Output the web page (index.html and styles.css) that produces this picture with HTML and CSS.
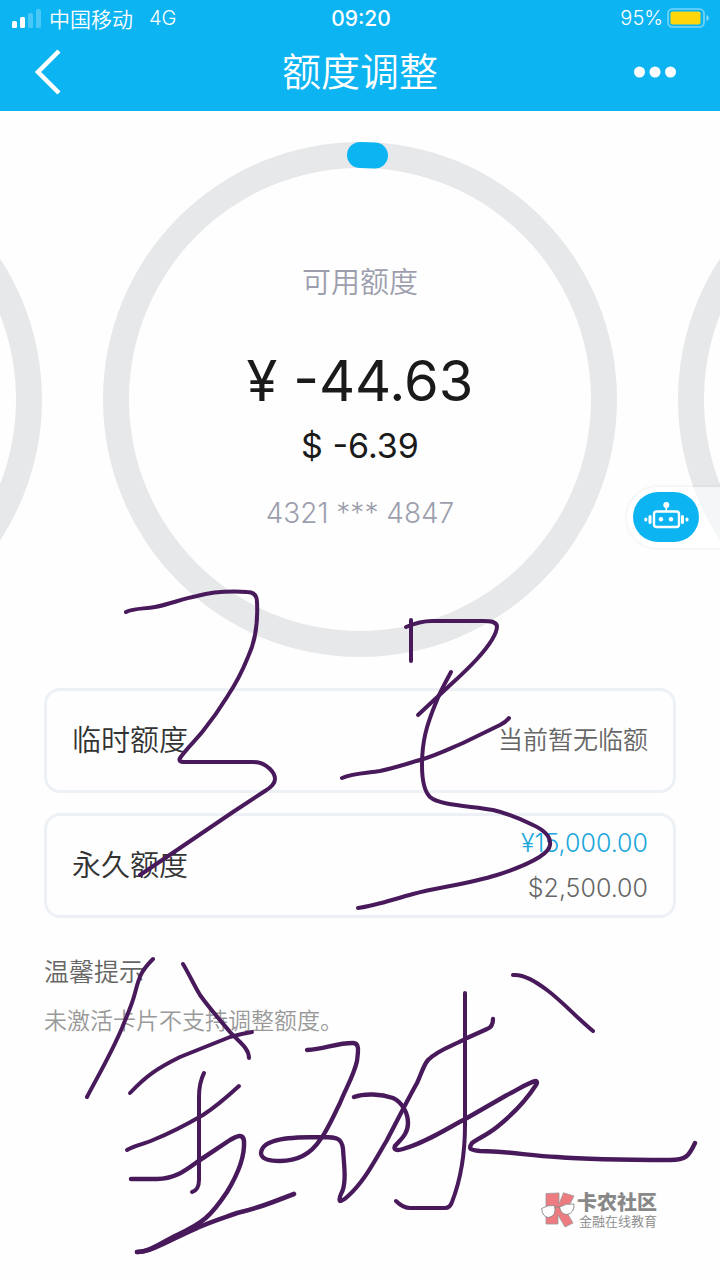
FILE: index.html
```html
<!DOCTYPE html>
<html lang="zh-CN">
<head>
<meta charset="utf-8">
<meta name="viewport" content="width=device-width, initial-scale=1">
<title>额度调整</title>
<link rel="stylesheet" href="styles.css">
</head>
<body>
<div class="screen">
  <header class="header">
    <div class="status">
      <div class="status-left">
        <svg class="signal" viewBox="0 0 30 20" aria-hidden="true">
          <rect x="0" y="13" width="5" height="7" rx="1.5"/>
          <rect x="8" y="9" width="5" height="11" rx="1.5"/>
          <rect x="16" y="5" width="5" height="15" rx="1.5" opacity=".25"/>
          <rect x="24" y="1" width="5" height="19" rx="1.5" opacity=".25"/>
        </svg>
        <span class="carrier">中国移动</span>
        <span>4G</span>
      </div>
      <time class="clock">09:20</time>
      <div class="status-right">
        <span>95%</span>
        <svg class="battery" viewBox="0 0 43 20" aria-hidden="true">
          <rect x="1" y="1" width="36" height="18" rx="4.5" fill="none" stroke="#fff" stroke-opacity=".45" stroke-width="1.6"/>
          <rect x="3.5" y="3.5" width="30" height="13" rx="2" fill="#ffd60a"/>
          <path d="M39.5 7c3 .8 3 5.200 0 6z" fill="#fff" fill-opacity=".5"/>
        </svg>
      </div>
    </div>
    <nav class="nav">
      <button class="icon-button" type="button" aria-label="返回">
        <svg class="back" viewBox="0 0 28 46"><path d="M25 2 4 23l21 21" fill="none" stroke="#fff" stroke-width="4.500"/></svg>
      </button>
      <h1 class="title">额度调整</h1>
      <button class="icon-button icon-button-end" type="button" aria-label="更多">
        <svg class="more" viewBox="0 0 42 12"><circle cx="5.500" cy="6" r="5.500"/><circle cx="21" cy="6" r="5.500"/><circle cx="36.500" cy="6" r="5.500"/></svg>
      </button>
    </nav>
  </header>

  <main>
    <section class="carousel">
      <div class="ring"></div>
      <div class="ring ring-active">
        <svg class="marker" viewBox="0 0 514 514" aria-hidden="true"><path d="M257 13A244 244 0 0 1 272 13.500" fill="none" stroke="#0cb4f2" stroke-width="26" stroke-linecap="round"/></svg>
        <p class="ring-label">可用额度</p>
        <p class="amount">¥ -44.63</p>
        <p class="amount-usd">$ -6.39</p>
        <p class="card-number">4321 *** 4847</p>
      </div>
      <div class="ring"></div>
      <button class="assistant" type="button" aria-label="智能客服">
        <svg class="robot" viewBox="0 0 66 50">
          <rect width="66" height="50" rx="25" fill="#0cb4f2"/>
          <g fill="none" stroke="#fff" stroke-linecap="round">
            <rect x="21" y="19.500" width="25" height="15.500" rx="2.500" stroke-width="2.400"/>
            <path d="M33.300 14v5" stroke-width="1.600"/>
            <path d="M17 24.500v6M49.500 24.500v6" stroke-width="3"/>
            <path d="M12.800 27v1M54 27v1" stroke-width="3"/>
          </g>
          <g fill="#fff"><circle cx="33.300" cy="13" r="3"/><circle cx="28" cy="27.300" r="2.200"/><circle cx="38" cy="27.300" r="2.200"/></g>
        </svg>
      </button>
    </section>

    <section class="limits">
      <div class="limit-card">
        <h2 class="limit-name">临时额度</h2>
        <p class="limit-value">当前暂无临额</p>
      </div>
      <div class="limit-card">
        <h2 class="limit-name">永久额度</h2>
        <div class="limit-value">
          <p class="limit-cny">¥15,000.00</p>
          <p>$2,500.00</p>
        </div>
      </div>
    </section>

    <section class="tips">
      <h2 class="tips-title">温馨提示</h2>
      <p class="tips-text">未激活卡片不支持调整额度。</p>
    </section>
  </main>

  <svg class="ink" viewBox="0 0 720 1280" aria-hidden="true">
    <path d="M126 612C134 608 144 609 155 607C171 604 181 599 197 596C212 592 231 591 247 592C254 592 257 596 257 602C258 622 256 640 248 657C242 672 235 685 227 697C219 710 211 721 203 731C195 741 187 748 180 758Q178 762 184 762H253C262 762 267 766 270 769C274 773 275 776 275 779C275 784 270 788 265 791L233 812L180 848L140 875"/>
    <path d="M411 620V661"/>
    <path d="M406 627C413 624 422 621 432 621H483C492 621 496 622 497 626C497 635 487 648 477 659C467 670 458 678 447 688L418 715"/>
    <path d="M451 672C445 683 440 692 437 700C426 726 422 742 422 765C422 781 424 791 430 797C440 806 474 806 493 810C510 814 523 820 533 825C546 831 551 838 550 845C549 855 525 866 497 875C468 884 440 887 413 894C391 900 374 906 358 908"/>
    <path d="M342 778C353 773 368 773 380 771C394 768 406 764 420 760C435 756 449 749 463 743L500 725Q506 722 509 718"/>
    <path d="M153 959C140 972 139 978 135 993C131 1008 127 1015 122 1028C111 1054 99 1074 87 1097"/>
    <path d="M183 964C189 974 194 985 200 995C210 1009 220 1020 230 1032C239 1042 249 1048 249 1058"/>
    <path d="M130 1093C147 1075 158 1068 180 1057L230 1037Q240 1034 252 1032"/>
    <path d="M204 1073C200 1081 199 1088 199 1097V1180Q199 1190 192 1192"/>
    <path d="M127 1150C134 1146 144 1144 153 1140C168 1134 191 1122 203 1115C217 1106 227 1097 239 1086"/>
    <path d="M131 1179H157C178 1179 189 1167 203 1158L230 1140C237 1136 243 1133 244 1141C245 1157 238 1174 227 1192C211 1216 203 1223 177 1235C164 1241 150 1252 137 1252" stroke-width="4.500"/>
    <path d="M137 1252C152 1252 175 1237 197 1228C210 1222 223 1218 237 1213C249 1210 260 1207 273 1202L294 1194" stroke-width="4.600"/>
    <path d="M307 1050C325 1049 336 1043 353 1043C360 1043 358 1052 357 1061C354 1075 346 1088 340 1103C333 1117 327 1131 320 1140C310 1155 296 1161 280 1161C268 1161 261 1159 261 1153C262 1138 292 1137 323 1137C336 1137 342 1138 343 1149C344 1165 347 1184 341 1194C338 1201 339 1204 347 1197C364 1182 374 1162 387 1140C398 1119 408 1099 417 1083C421 1075 423 1066 428 1060C439 1049 453 1046 467 1038L487 1029Q493 1027 493 1019" stroke-width="4.300"/>
    <path d="M354 1097C365 1093 381 1094 393 1098C402 1102 408 1113 408 1123C408 1134 401 1139 395 1146C393 1150 397 1151 403 1149C425 1143 446 1129 467 1118L507 1095C517 1090 529 1082 536 1081Q538 1082 536 1085C525 1102 512 1115 497 1127C487 1135 479 1138 472 1143C468 1149 470 1150 480 1151C507 1151 531 1156 557 1157C593 1160 632 1160 670 1160C686 1160 689 1156 695 1143" stroke-width="4.400"/>
    <path d="M465 993V1125C465 1157 459 1184 452 1202Q450 1208 445 1208H412Q404 1209 396 1201"/>
    <path d="M513 975C524 974 536 982 547 990C563 1002 577 1018 593 1031"/>
  </svg>

  <footer class="watermark">
    <svg class="logo" viewBox="0 0 36 36" aria-hidden="true">
      <path d="M5 1.500 18 1v11L22.500.8 33 4l-6 12-2 3 7 12-8 4-7-12v9H5z" fill="#ed7b80" stroke="#999" stroke-width=".8" stroke-linejoin="round"/>
      <g fill="#fff" stroke="#888" stroke-width=".9" stroke-linejoin="round">
        <path d="M.6 16.500Q7 12.500 13.500 13.500 16 24 7.500 25.500 1.500 25 .6 16.500z"/>
        <path d="M18.500 15Q25 11 33 12q.5 9-7 10.500-6 0-7.500-7.500z"/>
      </g>
      <path d="M14 15.500q2-1.500 4.500-.5" fill="none" stroke="#888"/>
    </svg>
    <div>
      <p class="brand">卡农社区</p>
      <p class="brand-sub">金融在线教育</p>
    </div>
  </footer>
</div>
</body>
</html>
```
FILE: styles.css
```css
* { box-sizing: border-box; }

body {
  margin: 0;
  background: #fefefe;
  color: #333;
  font-family: Inter, "Noto Sans CJK SC", sans-serif;
  font-weight: 350;
}

h1, h2, p { margin: 0; font-weight: inherit; }

button {
  padding: 0;
  border: 0;
  background: none;
}

svg { display: block; }

.screen {
  position: relative;
  display: flex;
  flex-direction: column;
  min-height: 100vh;
  overflow: hidden;
}

.header {
  height: 111px;
  background: #0cb4f2;
  color: #fff;
}

.status {
  display: grid;
  grid-template-columns: 1fr auto 1fr;
  align-items: center;
  height: 36px;
  padding: 0 10px 0 12px;
  font-size: 20px;
}

.status-left, .status-right {
  display: flex;
  align-items: center;
}

.status-right { justify-content: flex-end; gap: 4px; }

.signal {
  width: 30px;
  height: 20px;
  margin-right: 7px;
  fill: #fff;
}

.carrier { margin-right: 16px; font-size: 21px; }
.clock { font-weight: 500; font-size: 21px; }
.battery { width: 43px; height: 20px; }

.nav {
  display: grid;
  grid-template-columns: 1fr auto 1fr;
  align-items: center;
  height: 72px;
  padding: 0 34px;
}

.icon-button { justify-self: start; }
.icon-button-end { justify-self: end; padding-right: 10px; }
.back { width: 28px; height: 46px; }
.more { width: 42px; height: 12px; fill: #fff; }
.title { font-size: 39px; line-height: 56px; }

.carousel {
  position: relative;
  display: flex;
  justify-content: center;
  gap: 61px;
  padding: 31px 0;
  overflow: hidden;
}

.ring {
  flex: none;
  width: 514px;
  height: 515px;
  border: 26px solid #e6e8ea;
  border-radius: 50%;
  text-align: center;
}

.ring-active {
  position: relative;
  padding-top: 94px;
}

.marker {
  position: absolute;
  inset: -26px;
}

.ring-label {
  color: #9c9ead;
  font-size: 29px;
  line-height: 42px;
}

.amount {
  margin-top: 41px;
  color: #1a1a1a;
  font-size: 56px;
  font-weight: 400;
  line-height: 72px;
}

.amount-usd {
  margin-top: 8px;
  color: #1a1a1a;
  font-size: 34px;
  font-weight: 400;
  line-height: 42px;
}

.card-number {
  margin-top: 28px;
  color: #9c9ead;
  font-size: 28px;
  line-height: 36px;
}

.assistant {
  position: absolute;
  top: 376px;
  right: 0;
  padding: 5px 21px 6px 6px;
  border-radius: 31px 0 0 31px;
  background: rgba(255, 255, 255, .6);
  box-shadow: 0 0 3px 1px rgba(60, 60, 80, .07);
}

.robot { width: 66px; height: 50px; }

.limits {
  display: grid;
  gap: 20px;
  padding: 0 44px;
}

.limit-card {
  display: flex;
  align-items: center;
  justify-content: space-between;
  min-height: 105px;
  padding: 0 25px;
  border: 3px solid #edf0f5;
  border-radius: 16px;
}

.limit-name { font-size: 29px; line-height: 42px; }

.limit-value {
  color: #666;
  font-size: 25px;
  line-height: 45px;
  text-align: right;
}

.limit-cny { color: #1ca6dc; }

.tips { padding: 36px 44px; }

.tips-title {
  color: #666;
  font-size: 25px;
  line-height: 36px;
}

.tips-text {
  margin-top: 14px;
  color: #999;
  font-size: 23px;
  line-height: 34px;
}

.ink {
  position: absolute;
  top: 0;
  left: 0;
  width: 100%;
  fill: none;
  stroke: #491a5b;
  stroke-width: 4;
  stroke-linecap: round;
  stroke-linejoin: round;
  pointer-events: none;
}

.watermark {
  display: flex;
  align-items: center;
  align-self: flex-end;
  margin: auto 63px 52px 0;
  color: #888;
}

.logo { width: 36px; height: 36px; }
.brand { font-size: 20px; font-weight: 900; line-height: 22px; }
.brand-sub { padding-left: 2px; font-size: 13px; line-height: 14px; }
```
